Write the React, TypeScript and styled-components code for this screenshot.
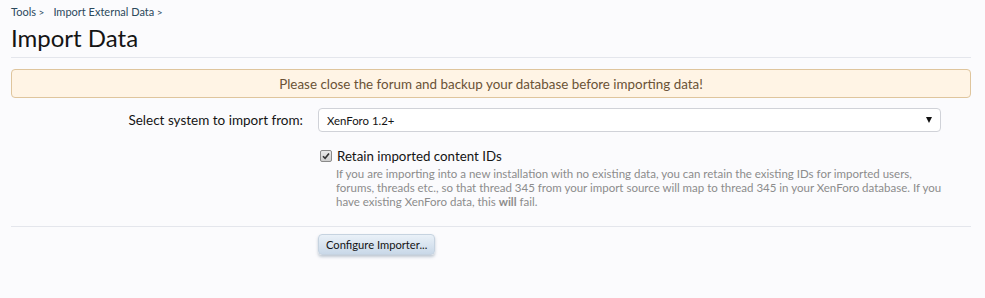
import styled, { createGlobalStyle } from "styled-components";

const GlobalStyle = createGlobalStyle`
  html, body {
    margin: 0;
    padding: 0;
    background: #fbfbfd;
  }
  body {
    font-family: Lato, "Liberation Sans", Arial, sans-serif;
    color: #141414;
  }
`;

const Page = styled.div`
  padding: 4px 14px 20px 11px;
`;

const Breadcrumb = styled.div`
  display: flex;
  gap: 9px;
  font-size: 11px;
  line-height: 16px;
  color: #2b485c;
`;

const Crumb = styled.span`
  &::after {
    content: " >";
    font-size: 10px;
  }
`;

const Title = styled.h1`
  margin: 3px 0 0;
  padding-bottom: 4px;
  font-size: 24px;
  font-weight: 400;
  line-height: 30px;
  color: #141414;
  border-bottom: 1px solid #e4e6ec;
`;

const Notice = styled.div`
  margin-top: 11px;
  height: 27px;
  border: 1px solid #dfc59d;
  border-radius: 4px;
  background: #fff4e5;
  color: #6a5236;
  font-size: 13.4px;
  display: flex;
  align-items: center;
  justify-content: center;
`;

const Form = styled.div`
  margin-top: 10px;
`;

const Row = styled.div`
  display: grid;
  grid-template-columns: 292px 1fr;
  column-gap: 15px;
  align-items: start;
  padding-right: 31px;
`;

const Label = styled.label`
  text-align: right;
  font-size: 13.5px;
  line-height: 24px;
  color: #141414;
`;

const SelectBox = styled.div`
  height: 22px;
  border: 1px solid #d0d2d8;
  border-radius: 4px;
  background: #ffffff;
  display: flex;
  align-items: center;
  padding: 0 8px;
  font-size: 11.4px;
  color: #141414;
`;

const Arrow = styled.span`
  margin-left: auto;
  width: 0;
  height: 0;
  border-left: 3.5px solid transparent;
  border-right: 3.5px solid transparent;
  border-top: 6px solid #111;
`;

const CheckRow = styled.div`
  margin-top: 16px;
  padding-left: 2px;
  display: flex;
  align-items: center;
  gap: 5px;
  font-size: 13.3px;
  color: #141414;
`;

const Check = styled.span`
  width: 10px;
  height: 10px;
  border: 1px solid #8a8a8a;
  border-radius: 2px;
  background: linear-gradient(#e9e9e9, #cfcfcf);
  display: flex;
  align-items: center;
  justify-content: center;
`;

const Explain = styled.p`
  margin: 3px 0 0 18px;
  font-size: 11.5px;
  line-height: 14px;
  color: #8c8c8c;
  white-space: nowrap;
`;

const Strong = styled.b`
  font-weight: 700;
`;

const Divider = styled.div`
  margin: 17px 0 0;
  border-top: 1px solid #e4e6ec;
`;

const Button = styled.button`
  margin-top: 7px;
  height: 21px;
  padding: 0 7px;
  border: 1px solid #c6d3e0;
  border-radius: 4px;
  background: linear-gradient(#eaf1f8, #c9d8e8);
  box-shadow: 0 2px 3px rgba(120, 140, 160, 0.45);
  font-family: Lato, "Liberation Sans", Arial, sans-serif;
  font-size: 11.2px;
  color: #141414;
  cursor: pointer;
`;

export default function App() {
  return (
    <>
      <GlobalStyle />
      <Page>
        <Breadcrumb>
          <Crumb>Tools</Crumb>
          <Crumb>Import External Data</Crumb>
        </Breadcrumb>
        <Title>Import Data</Title>
        <Notice>
          Please close the forum and backup your database before importing data!
        </Notice>
        <Form>
          <Row>
            <Label>Select system to import from:</Label>
            <div>
              <SelectBox>
                XenForo 1.2+
                <Arrow />
              </SelectBox>
              <CheckRow>
                <Check>
                  <svg width="8" height="8" viewBox="0 0 8 8">
                    <path d="M1 4.2 L3.1 6.3 L7 1.4" fill="none" stroke="#333" strokeWidth="1.6" />
                  </svg>
                </Check>
                Retain imported content IDs
              </CheckRow>
              <Explain>
                If you are importing into a new installation with no existing data, you can retain the existing IDs for imported users,
                <br />
                forums, threads etc., so that thread 345 from your import source will map to thread 345 in your XenForo database. If you
                <br />
                have existing XenForo data, this <Strong>will</Strong> fail.
              </Explain>
            </div>
          </Row>
          <Divider />
          <Row>
            <span />
            <div>
              <Button>Configure Importer...</Button>
            </div>
          </Row>
        </Form>
      </Page>
    </>
  );
}
